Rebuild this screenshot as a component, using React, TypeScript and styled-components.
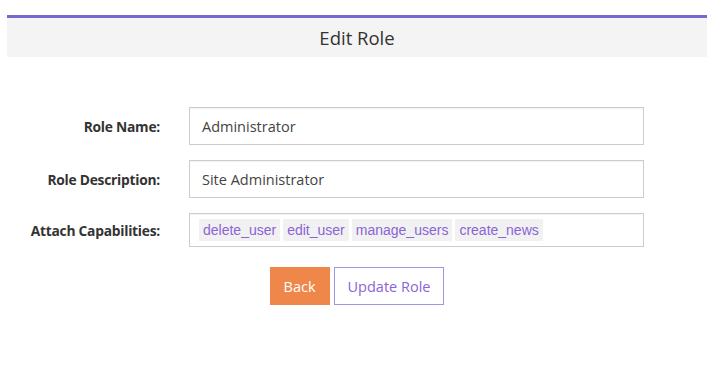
import React from "react";
import styled, { createGlobalStyle } from "styled-components";

const Global = createGlobalStyle`
  html, body { margin: 0; padding: 0; background: #fff; }
  body { font-family: "Open Sans", "Liberation Sans", sans-serif; color: #333; }
  * { box-sizing: border-box; }
`;

const Page = styled.div`
  padding: 15px 7px 0 7px;
  width: 714px;
`;

const Header = styled.div`
  border-top: 3px solid #7b64cf;
  background: #f4f4f4;
  height: 42px;
  display: flex;
  align-items: center;
  justify-content: center;
  font-size: 18.5px;
  color: #333;
`;

const Form = styled.div`
  margin-top: 50px;
  display: grid;
  grid-template-columns: 153px 455px;
  column-gap: 29px;
  row-gap: 15px;
  align-items: center;
`;

const Label = styled.label`
  text-align: right;
  font-weight: 700;
  font-size: 13.8px;
  color: #333;
  letter-spacing: -0.25px;
`;

const Input = styled.div<{ $h: number }>`
  height: ${(p) => p.$h}px;
  border: 1px solid #cccccc;
  box-shadow: inset 0 1px 1px rgba(0,0,0,0.05);
  display: flex;
  align-items: center;
  padding: 0 12px;
  font-size: 14.5px;
  color: #444;
  gap: 3px;
`;

const Tag = styled.span`
  background: #f1f1f1;
  color: #8a64d6;
  font-family: "Liberation Sans", Arial, sans-serif;
  font-size: 14px;
  height: 22px;
  line-height: 22px;
  padding: 0 4px;
  &:first-child { margin-left: -3px; }
`;

const Actions = styled.div`
  grid-column: 1 / span 2;
  display: flex;
  justify-content: center;
  gap: 4px;
  margin-top: 5px;
  padding-left: 63px;
`;

const Button = styled.button<{ $primary?: boolean }>`
  height: 38px;
  padding: 0 13px;
  font-family: "Open Sans", "Liberation Sans", sans-serif;
  font-size: 14.5px;
  border: 1px solid ${(p) => (p.$primary ? "#f0874a" : "#a793e2")};
  background: ${(p) => (p.$primary ? "#f0874a" : "#fff")};
  color: ${(p) => (p.$primary ? "#fff" : "#8a64d6")};
  cursor: pointer;
`;

export default function App() {
  return (
    <>
      <Global />
      <Page>
        <Header>Edit Role</Header>
        <Form>
          <Label>Role Name:</Label>
          <Input $h={38}>Administrator</Input>
          <Label>Role Description:</Label>
          <Input $h={38}>Site Administrator</Input>
          <Label>Attach Capabilities:</Label>
          <Input $h={34}>
            <Tag>delete_user</Tag>
            <Tag>edit_user</Tag>
            <Tag>manage_users</Tag>
            <Tag>create_news</Tag>
          </Input>
          <Actions>
            <Button $primary>Back</Button>
            <Button>Update Role</Button>
          </Actions>
        </Form>
      </Page>
    </>
  );
}
